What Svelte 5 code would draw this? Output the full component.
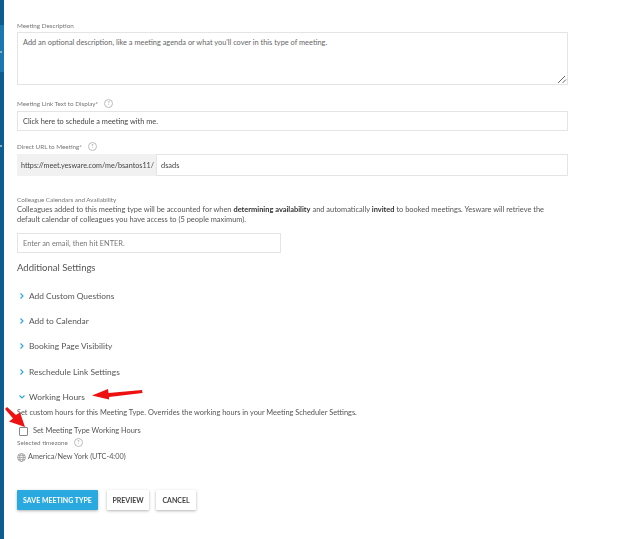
<script>
  const sections = [
    { title: "Add Custom Questions" },
    { title: "Add to Calendar" },
    { title: "Booking Page Visibility" },
    { title: "Reschedule Link Settings" },
    { title: "Working Hours", open: true },
  ];
</script>

<div class="page">
  <aside class="rail">
    <div class="rail-active"><span class="rail-tick"></span></div>
    <span class="rail-tick lower"></span>
  </aside>

  <main class="form">
    <label class="label first" for="desc">Meeting Description</label>
    <div class="textarea-wrap">
      <div id="desc" class="field textarea">Add an optional description, like a meeting agenda or what you'll cover in this type of meeting.</div>
      <svg class="grip" width="10" height="10" viewBox="0 0 10 10" aria-hidden="true">
        <path d="M1 9 8 2M5.5 9 9 5.5" stroke="#666" stroke-width="1" fill="none" />
      </svg>
    </div>

    <div class="label with-help link-label">
      Meeting Link Text to Display*
      <span class="help">?</span>
    </div>
    <div class="field line dark">Click here to schedule a meeting with me.</div>

    <div class="label with-help url-label">
      Direct URL to Meeting*
      <span class="help">?</span>
    </div>
    <div class="url-row">
      <div class="url-prefix">https://meet.yesware.com/me/bsantos11/</div>
      <div class="url-input">dsads</div>
    </div>

    <div class="label colleague-label">Colleague Calendars and Availability</div>
    <p class="para">
      Colleagues added to this meeting type will be accounted for when <b>determining availability</b> and automatically <b>invited</b> to booked meetings. Yesware will retrieve the<br />default calendar of colleagues you have access to (5 people maximum).
    </p>
    <div class="field line email">Enter an email, then hit ENTER.</div>

    <h3 class="heading">Additional Settings</h3>

    <ul class="sections">
      {#each sections as s}
        <li class="section">
          <svg class="chev" class:open={s.open} width="6" height="6" viewBox="0 0 6 6" aria-hidden="true">
            <path d="M1.5 .5 4 3 1.5 5.5" stroke="#27a4dc" stroke-width="1.1" fill="none" />
          </svg>
          {s.title}
        </li>
      {/each}
    </ul>

    <p class="hours-note">Set custom hours for this Meeting Type. Overrides the working hours in your Meeting Scheduler Settings.</p>
    <div class="check-row">
      <span class="checkbox"></span>
      Set Meeting Type Working Hours
    </div>
    <div class="label with-help tz-label">
      Selected timezone
      <span class="help">?</span>
    </div>
    <div class="tz">
      <svg width="9" height="9" viewBox="0 0 10 10" aria-hidden="true">
        <g stroke="#888" stroke-width=".7" fill="none">
          <circle cx="5" cy="5" r="4.4" />
          <ellipse cx="5" cy="5" rx="2" ry="4.4" />
          <path d="M.6 5h8.8M1.2 2.9h7.600M1.2 7.1h7.600" />
        </g>
      </svg>
      America/New York (UTC-4:00)
    </div>

    <div class="actions">
      <button class="btn primary">SAVE MEETING TYPE</button>
      <button class="btn preview">PREVIEW</button>
      <button class="btn cancel">CANCEL</button>
    </div>
  </main>

  <!-- red annotation arrows pasted over the screenshot -->
  <svg class="arrows" width="160" height="60" viewBox="0 380 160 60" aria-hidden="true">
    <path d="M142 390 108.5 393 108 389 92 395.5 109 399.5 109 397 142.5 393Z" fill="#ee1111" />
    <path d="M5 409 7 407 16 415 20 412.5 25 427 9 421.5 13 418.5Z" fill="#ee1111" />
  </svg>
</div>

<style>
  :global(body) {
    margin: 0;
    background: #fff;
  }

  .page {
    position: relative;
    display: flex;
    width: 639px;
    height: 539px;
    overflow: hidden;
    font-family: Lato, "Liberation Sans", sans-serif;
    color: #555;
  }

  .rail {
    flex: none;
    width: 4px;
    background: #0d5d8f;
    padding-top: 25px;
  }

  .rail-active {
    height: 47px;
    padding-top: 26px;
    box-sizing: border-box;
    background: #1b78ae;
  }

  .rail-tick {
    display: block;
    width: 2px;
    height: 2px;
    background: #7fb0cc;
  }

  .rail-tick.lower {
    margin-top: 73px;
  }

  /* the reference is a scaled-down capture, so everything is slightly soft */
  .form {
    flex: none;
    width: 551px;
    margin-left: 13px;
    filter: blur(0.3px);
  }

  .label {
    display: block;
    font-size: 6.3px;
    line-height: 8px;
    color: #777;
  }

  .first {
    margin-top: 22px;
  }

  .with-help {
    display: flex;
    align-items: center;
    gap: 6px;
  }

  .help {
    display: inline-block;
    width: 7px;
    height: 7px;
    border: 1px solid #bbb;
    border-radius: 50%;
    font-size: 5px;
    line-height: 7px;
    text-align: center;
    color: #999;
  }

  .field {
    box-sizing: border-box;
    border: 1px solid #e4e4e4;
    background: #fff;
    font-size: 7.4px;
    color: #666;
    padding: 0 5px;
  }

  .textarea-wrap {
    position: relative;
    margin-top: 2px;
  }

  .textarea {
    height: 53px;
    padding-top: 4px;
    line-height: 11px;
  }

  .grip {
    position: absolute;
    right: 1px;
    bottom: 1px;
  }

  .line {
    display: flex;
    align-items: center;
    height: 20px;
  }

  .dark {
    color: #444;
  }

  .link-label {
    margin-top: 14px;
    margin-bottom: 3px;
  }

  .url-label {
    margin-top: 11px;
    margin-bottom: 3px;
  }

  .url-row {
    display: flex;
    height: 22px;
  }

  .url-prefix {
    display: flex;
    align-items: center;
    flex: none;
    width: 139px;
    box-sizing: border-box;
    padding-left: 4px;
    background: #f1f1f1;
    font-size: 7.2px;
    color: #444;
    white-space: nowrap;
  }

  .url-input {
    flex: 1;
    display: flex;
    align-items: center;
    padding-left: 4px;
    border: 1px solid #e4e4e4;
    font-size: 7.4px;
    color: #444;
  }

  .colleague-label {
    margin-top: 20px;
  }

  .para {
    margin: 1px 0 0;
    font-size: 7.45px;
    line-height: 10px;
    color: #555;
  }

  .para b {
    color: #333;
    font-weight: 700;
  }

  .email {
    width: 264px;
    margin-top: 8px;
    color: #777;
  }

  .heading {
    margin: 8px 0 0;
    font-size: 9.5px;
    line-height: 13px;
    font-weight: 400;
    color: #555;
  }

  .sections {
    list-style: none;
    margin: 9px 0 0;
    padding: 0;
  }

  .section {
    display: flex;
    align-items: center;
    height: 25.3px;
    padding-left: 2px;
    gap: 4px;
    font-size: 8.4px;
    color: #555;
  }

  .chev.open {
    transform: rotate(90deg);
  }

  .hours-note {
    margin: -1px 0 0;
    font-size: 7.4px;
    line-height: 10px;
  }

  .check-row {
    display: flex;
    align-items: center;
    gap: 5px;
    margin-top: 8px;
    padding-left: 2px;
    font-size: 7.4px;
    line-height: 10px;
  }

  .checkbox {
    box-sizing: border-box;
    width: 9px;
    height: 9px;
    border: 1px solid #888;
    border-radius: 1px;
  }

  .tz-label {
    margin-top: 2px;
  }

  .tz {
    display: flex;
    align-items: center;
    gap: 2px;
    margin-top: 5px;
    font-size: 7.3px;
    line-height: 10px;
  }

  .actions {
    display: flex;
    margin-top: 28px;
  }

  .btn {
    height: 20px;
    padding: 0;
    border: 0;
    border-radius: 1px;
    background: #fff;
    box-shadow: 0 1px 3px rgb(0 0 0 / 30%);
    font-family: inherit;
    font-size: 7px;
    font-weight: 700;
    color: #444;
  }

  .primary {
    width: 81px;
    background: #29a9e0;
    color: #fff;
  }

  .preview {
    width: 42px;
    margin-left: 9px;
  }

  .cancel {
    width: 40px;
    margin-left: 7px;
  }

  .arrows {
    position: absolute;
    left: 0;
    top: 380px;
  }
</style>
